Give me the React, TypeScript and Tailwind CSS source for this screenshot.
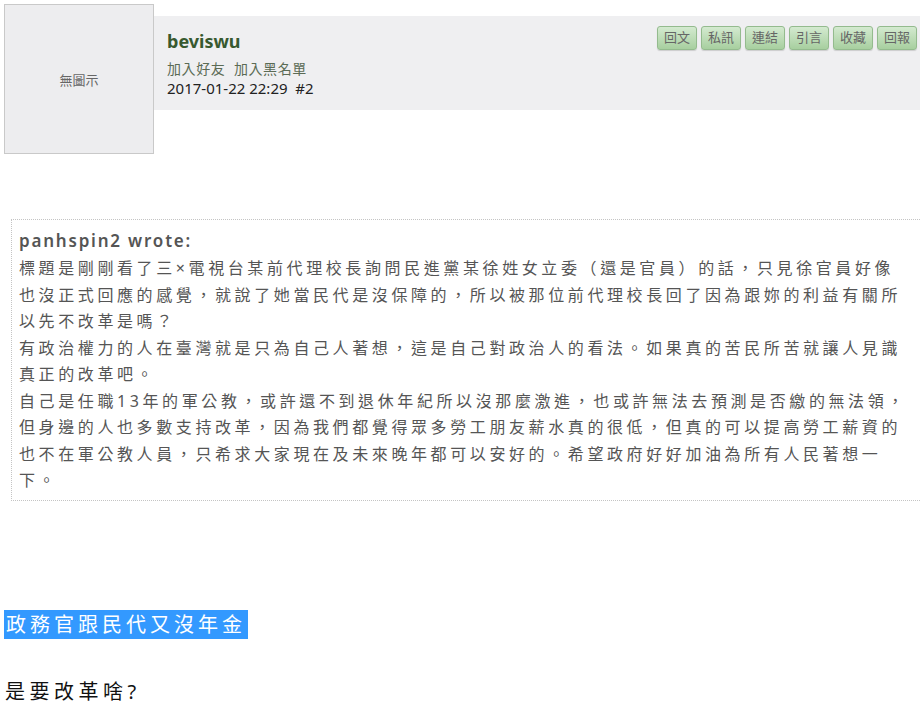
const cjk = "font-['Noto_Sans','Noto_Sans_CJK_TC',sans-serif]";

const actions = ['回文', '私訊', '連結', '引言', '收藏', '回報'];

const quoteLines = [
  '標題是剛剛看了三×電視台某前代理校長詢問民進黨某徐姓女立委（還是官員）的話，只見徐官員好像',
  '也沒正式回應的感覺，就說了她當民代是沒保障的，所以被那位前代理校長回了因為跟妳的利益有關所',
  '以先不改革是嗎？',
  '有政治權力的人在臺灣就是只為自己人著想，這是自己對政治人的看法。如果真的苦民所苦就讓人見識',
  '真正的改革吧。',
  '自己是任職13年的軍公教，或許還不到退休年紀所以沒那麼激進，也或許無法去預測是否繳的無法領，',
  '但身邊的人也多數支持改革，因為我們都覺得眾多勞工朋友薪水真的很低，但真的可以提高勞工薪資的',
  '也不在軍公教人員，只希求大家現在及未來晚年都可以安好的。希望政府好好加油為所有人民著想一',
  '下。',
];

function App() {
  return (
    <div className={`w-[920px] h-[704px] overflow-hidden bg-white ${cjk}`}>
      {/* Post header */}
      <div className="flex pl-1 pt-1">
        <div className="flex h-[150px] w-[150px] shrink-0 items-center justify-center border border-[#c9c9c9] bg-[#ededef] pt-[3px] text-[13px] text-[#666]">
          無圖示
        </div>
        <div className="mt-3 flex h-[94px] flex-1 justify-between bg-[#efeff1] pl-[13px] pr-[3px]">
          <div className="pt-[12px]">
            <div className="text-[18px] font-bold leading-[26px] text-[#37592f]">beviswu</div>
            <div className="mt-[5px] text-[14px] leading-[20px] tracking-[0.6px] text-[#5b6b55]">
              加入好友&nbsp;&nbsp;加入黑名單
            </div>
            <div className="text-[15px] leading-[19px] text-[#222]">2017-01-22 22:29&nbsp;&nbsp;#2</div>
          </div>
          <div className="flex gap-[4px] pt-[10px]">
            {actions.map((a) => (
              <span
                key={a}
                className="flex h-[24px] w-[40px] items-center justify-center rounded-[3px] border border-[#94bb8e] bg-gradient-to-b from-[#d4ead0] to-[#a7cf9f] text-[13px] text-[#666] shadow-[0_1px_1px_rgba(0,0,0,0.15)]"
              >
                {a}
              </span>
            ))}
          </div>
        </div>
      </div>

      {/* Quote */}
      <div className="ml-[11px] mt-[65px] w-[915px] border border-dotted border-[#c4c4c4] pb-[6px] pl-[7px] pt-[9px] text-[#555]">
        <div className="mb-[2px] text-[17px] font-semibold leading-[24px] tracking-[1.8px]">panhspin2 wrote:</div>
        {quoteLines.map((l, i) => (
          <div key={i} className="whitespace-nowrap text-[16px] leading-[26.5px] tracking-[3.6px]">
            {l}
          </div>
        ))}
      </div>

      {/* Reply body */}
      <div className="mt-[109px] pl-1">
        <span className="inline-block bg-[#3399ff] px-[2px] text-[20px] leading-[29px] tracking-[4px] text-white">
          政務官跟民代又沒年金
        </span>
      </div>
      <div className="mt-[38px] pl-[5px] text-[20px] leading-[29px] tracking-[4.5px] text-[#111]">是要改革啥?</div>
    </div>
  );
}

export default App;
